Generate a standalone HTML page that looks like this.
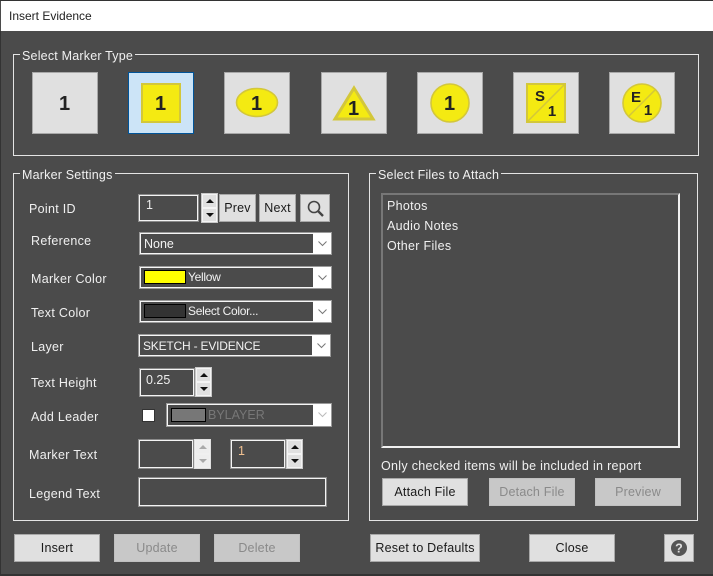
<!DOCTYPE html>
<html><head><meta charset="utf-8"><style>
html,body{margin:0;padding:0}
body{width:713px;height:576px;position:relative;overflow:hidden;background:#4b4b4b;font-family:"Liberation Sans",sans-serif;font-size:12.5px;color:#f0f0f0}
div,span{position:absolute;box-sizing:border-box;white-space:nowrap}
.title{left:1px;top:1px;width:712px;height:30px;background:#fff;color:#222;font-size:12px;line-height:30px;padding-left:8px}
.group{border:1px solid #e4e4e4}
.legend{background:#4b4b4b;padding:0 2px 0 2px;line-height:16px;height:16px;letter-spacing:.2px}
.mk{width:66px;height:62px;background:#e0e0e0;border:1px solid #a8a8a8}
.mk svg{position:absolute;left:-1px;top:-1px}
.mk text{font-family:"Liberation Sans",sans-serif;font-weight:700;fill:#222;text-anchor:middle}
.lbl{line-height:16px;height:16px;letter-spacing:.3px}
.in{border:1px solid #8a8a8a;box-shadow:inset 0 0 0 1px #f4f4f4;background:#4b4b4b;line-height:15px;padding-left:6px;color:#eee}
.combo{background:#4b4b4b;border:1px solid #9a9a9a;box-shadow:inset 0 0 0 1px #f6f6f6;line-height:22px;padding-left:4px;color:#f2f2f2}
.combo i{position:absolute;right:0;top:0;bottom:0;width:18px;background:#fff}
.combo svg{position:absolute;right:4px;top:8px}
.sw{left:4px;top:3px;width:42px;height:14px;border:1px solid #000;position:absolute}
.ct{position:absolute;left:48px;top:2px;font-size:12px;letter-spacing:-.3px;line-height:17px}
.spin{background:#f4f4f4;border:1px solid #c8c8c8}
.spin b{position:absolute;left:1px;width:13px;height:12px;background:#e0e0e0;display:block}
.spin svg{position:absolute;left:3px;top:3px}
.btn{height:28px;background:#e0e0e0;border:1px solid #a8a8a8;color:#1a1a1a;text-align:center;line-height:26px;letter-spacing:.2px}
.off{background:#c8c8c8;color:#8a8a8a;border-color:#c0c0c0}
</style></head><body>
<div style="left:0;top:0;width:713px;height:1px;background:#333"></div>
<div class="title">Insert Evidence</div>

<div class="group" style="left:13px;top:54px;width:686px;height:102px"></div>
<div class="legend" style="left:20px;top:48px">Select Marker Type</div>

<div class="mk" style="left:32px;top:72px"><svg width="66" height="62"><text x="32.5" y="38" font-size="20">1</text></svg></div>
<div class="mk" style="left:128px;top:72px;background:#cce4f7;border-color:#005499"><svg width="66" height="62"><rect x="14" y="12" width="38" height="38" fill="#f4ea12" stroke="#d3c73a" stroke-width="2"/><text x="32.5" y="38" font-size="20">1</text></svg></div>
<div class="mk" style="left:224px;top:72px"><svg width="66" height="62"><ellipse cx="33" cy="30.5" rx="20.5" ry="14" fill="#f4ea12" stroke="#d3c73a" stroke-width="1.6"/><text x="32.5" y="38" font-size="20">1</text></svg></div>
<div class="mk" style="left:321px;top:72px"><svg width="66" height="62"><path d="M33 16L52 47H14Z" fill="#f4ea12" stroke="#d3c73a" stroke-width="3"/><text x="32.5" y="43" font-size="20">1</text></svg></div>
<div class="mk" style="left:417px;top:72px"><svg width="66" height="62"><circle cx="33" cy="31" r="19" fill="#f4ea12" stroke="#d3c73a" stroke-width="1.6"/><text x="32.5" y="38" font-size="20">1</text></svg></div>
<div class="mk" style="left:513px;top:72px"><svg width="66" height="62"><rect x="14" y="12" width="38" height="38" fill="#f4ea12" stroke="#d3c73a" stroke-width="2"/><path d="M15 49L51 13" stroke="#d3c73a" stroke-width="1.5"/><text x="27" y="29" font-size="15">S</text><text x="39" y="44" font-size="15">1</text></svg></div>
<div class="mk" style="left:609px;top:72px"><svg width="66" height="62"><circle cx="33" cy="31" r="19" fill="#f4ea12" stroke="#d3c73a" stroke-width="1.6"/><path d="M20 44L46 18" stroke="#d3c73a" stroke-width="1.5"/><text x="27" y="30" font-size="15">E</text><text x="39" y="43" font-size="15">1</text></svg></div>

<div class="group" style="left:13px;top:173px;width:336px;height:348px"></div>
<div class="legend" style="left:20px;top:167px">Marker Settings</div>

<div class="lbl" style="left:29px;top:201px">Point ID</div>
<div class="in" style="left:138px;top:194px;width:61px;height:28px;padding:3px 0 0 7px">1</div>
<div class="spin" style="left:201px;top:193px;width:17px;height:30px"><b style="top:1px"><svg width="8" height="6"><path d="M4 1L8 5H0Z" fill="#111"/></svg></b><b style="top:15px"><svg width="8" height="6"><path d="M0 1H8L4 5Z" fill="#111"/></svg></b></div>
<div class="btn" style="left:219px;top:194px;width:37px;height:28px">Prev</div>
<div class="btn" style="left:259px;top:194px;width:37px;height:28px">Next</div>
<div class="btn" style="left:300px;top:194px;width:30px;height:28px"><svg width="22" height="22" style="position:absolute;left:3px;top:2px"><circle cx="10" cy="10" r="5.5" fill="none" stroke="#444" stroke-width="1.6"/><path d="M14 14L19 19" stroke="#444" stroke-width="2.4"/></svg></div>

<div class="lbl" style="left:31px;top:233px">Reference</div>
<div class="combo" style="left:139px;top:232px;width:193px;height:23px">None<i></i><svg width="9" height="6"><path d="M.5 .5L4.5 4.5L8.5 .5" fill="none" stroke="#777"/></svg></div>

<div class="lbl" style="left:31px;top:271px">Marker Color</div>
<div class="combo" style="left:139px;top:266px;width:193px;height:23px"><span class="sw" style="background:#ff0"></span><span class="ct">Yellow</span><i></i><svg width="9" height="6"><path d="M.5 .5L4.5 4.5L8.5 .5" fill="none" stroke="#777"/></svg></div>

<div class="lbl" style="left:31px;top:305px">Text Color</div>
<div class="combo" style="left:139px;top:300px;width:193px;height:23px"><span class="sw" style="background:#333"></span><span class="ct">Select Color...</span><i></i><svg width="9" height="6"><path d="M.5 .5L4.5 4.5L8.5 .5" fill="none" stroke="#777"/></svg></div>

<div class="lbl" style="left:31px;top:339px">Layer</div>
<div class="combo" style="left:138px;top:334px;width:193px;height:23px;font-size:12px;letter-spacing:-.2px">SKETCH - EVIDENCE<i></i><svg width="9" height="6"><path d="M.5 .5L4.5 4.5L8.5 .5" fill="none" stroke="#777"/></svg></div>

<div class="lbl" style="left:31px;top:375px">Text Height</div>
<div class="in" style="left:139px;top:368px;width:56px;height:29px;padding:4px 0 0 6px">0.25</div>
<div class="spin" style="left:195px;top:367px;width:17px;height:30px"><b style="top:1px"><svg width="8" height="6"><path d="M4 1L8 5H0Z" fill="#111"/></svg></b><b style="top:15px"><svg width="8" height="6"><path d="M0 1H8L4 5Z" fill="#111"/></svg></b></div>

<div class="lbl" style="left:31px;top:409px">Add Leader</div>
<div style="left:142px;top:409px;width:13px;height:13px;background:#fff;border:1px solid #333"></div>
<div class="combo" style="left:166px;top:403px;width:166px;height:24px;color:#777"><span class="sw" style="left:4px;top:4px;width:35px;background:#777"></span><span class="ct" style="left:41px;top:3px;letter-spacing:0;font-size:12.5px">BYLAYER</span><i></i><svg width="9" height="6"><path d="M.5 .5L4.5 4.5L8.5 .5" fill="none" stroke="#bbb"/></svg></div>

<div class="lbl" style="left:29px;top:447px">Marker Text</div>
<div class="in" style="left:138px;top:439px;width:56px;height:30px"></div>
<div class="spin" style="left:194px;top:439px;width:17px;height:30px;background:#f0f0f0;border-color:#e0e0e0"><b style="top:1px;background:#eee"><svg width="8" height="6"><path d="M4 1L8 5H0Z" fill="#aaa"/></svg></b><b style="top:15px;background:#eee"><svg width="8" height="6"><path d="M0 1H8L4 5Z" fill="#aaa"/></svg></b></div>
<div class="in" style="left:230px;top:439px;width:56px;height:30px;color:#f0c090;padding:4px 0 0 7px">1</div>
<div class="spin" style="left:286px;top:439px;width:17px;height:30px"><b style="top:1px"><svg width="8" height="6"><path d="M4 1L8 5H0Z" fill="#111"/></svg></b><b style="top:15px"><svg width="8" height="6"><path d="M0 1H8L4 5Z" fill="#111"/></svg></b></div>

<div class="lbl" style="left:29px;top:486px">Legend Text</div>
<div class="in" style="left:138px;top:477px;width:189px;height:30px"></div>

<div class="group" style="left:369px;top:173px;width:329px;height:348px"></div>
<div class="legend" style="left:376px;top:167px">Select Files to Attach</div>
<div style="left:381px;top:193px;width:299px;height:255px;border:2px solid;border-color:#777 #f0f0f0 #f0f0f0 #777;background:#4b4b4b"></div>
<div class="lbl" style="left:387px;top:198px">Photos</div>
<div class="lbl" style="left:387px;top:218px">Audio Notes</div>
<div class="lbl" style="left:387px;top:238px">Other Files</div>
<div class="lbl" style="left:381px;top:458px;letter-spacing:.31px">Only checked items will be included in report</div>

<div class="btn" style="left:382px;top:478px;width:86px">Attach File</div>
<div class="btn off" style="left:489px;top:478px;width:86px">Detach File</div>
<div class="btn off" style="left:595px;top:478px;width:86px">Preview</div>

<div class="btn" style="left:14px;top:534px;width:86px">Insert</div>
<div class="btn off" style="left:114px;top:534px;width:86px">Update</div>
<div class="btn off" style="left:214px;top:534px;width:86px">Delete</div>
<div class="btn" style="left:370px;top:534px;width:110px">Reset to Defaults</div>
<div class="btn" style="left:529px;top:534px;width:86px">Close</div>
<div class="btn" style="left:664px;top:534px;width:30px"><svg width="18" height="18" style="position:absolute;left:5px;top:4px"><circle cx="9" cy="9" r="8" fill="#555"/><text x="9" y="13.5" text-anchor="middle" font-family="Liberation Sans" font-weight="700" font-size="12.5" fill="#e0e0e0">?</text></svg></div>
<div style="left:0;top:574px;width:713px;height:2px;background:#333"></div>
<div style="left:0;top:31px;width:1px;height:545px;background:#333"></div>
</body></html>
